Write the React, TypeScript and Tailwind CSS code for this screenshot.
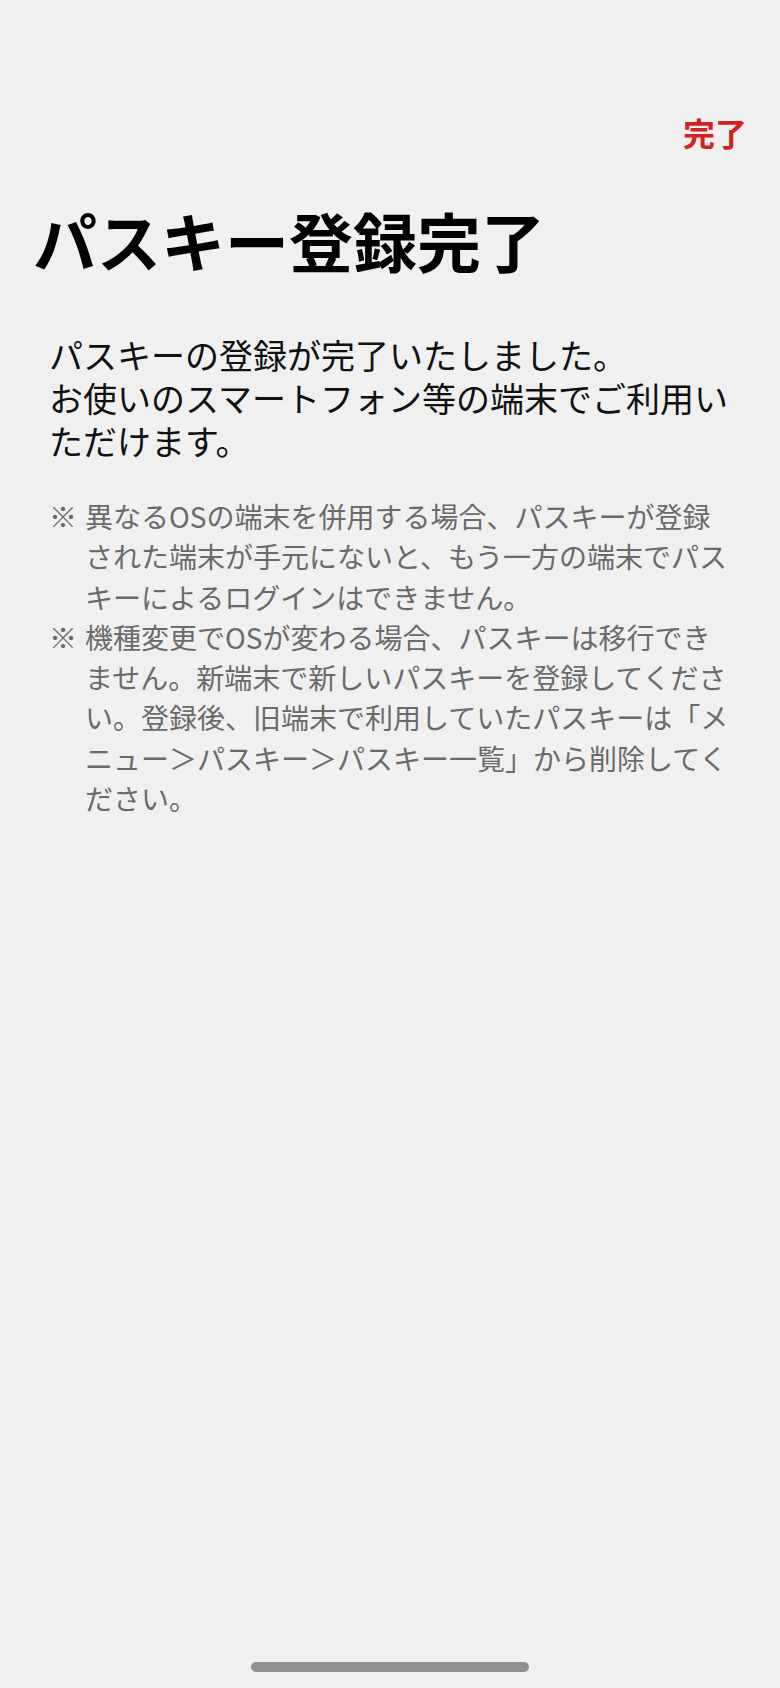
import React from "react";

const notes = [
  "異なるOSの端末を併用する場合、パスキーが登録された端末が手元にないと、もう一方の端末でパスキーによるログインはできません。",
  "機種変更でOSが変わる場合、パスキーは移行できません。新端末で新しいパスキーを登録してください。登録後、旧端末で利用していたパスキーは「メニュー＞パスキー＞パスキー一覧」から削除してください。",
];

export default function App() {
  return (
    <div
      className="min-h-[1688px] w-full bg-[#f0f0f0] flex flex-col"
      style={{ fontFamily: '"Noto Sans CJK JP", "Noto Sans", sans-serif' }}
    >
      <div className="pt-[112px] pr-[33px] flex justify-end">
        <button className="text-[32px] leading-[40px] font-bold text-[#d0221f]">完了</button>
      </div>
      <h1 className="mt-[47px] pl-[33px] text-[64px] leading-[80px] font-bold text-black">
        パスキー登録完了
      </h1>
      <div className="mt-[54px] pl-[49px] pr-[49px] text-[34px] leading-[43px] text-[#111111]">
        <p>パスキーの登録が完了いたしました。</p>
        <p>お使いのスマートフォン等の端末でご利用いただけます。</p>
      </div>
      <div className="mt-[34px] pl-[49px] pr-[49px] flex flex-col">
        {notes.map((n, i) => (
          <div key={i} className="flex text-[28px] leading-[40.3px] text-[#6a6a6a]">
            <span className="w-[36px] shrink-0">※</span>
            <span className="flex-1">{n}</span>
          </div>
        ))}
      </div>
      <div className="flex-1" />
      <div className="flex justify-center pb-[16px]">
        <div className="w-[278px] h-[10px] rounded-full bg-[#919191]" />
      </div>
    </div>
  );
}
